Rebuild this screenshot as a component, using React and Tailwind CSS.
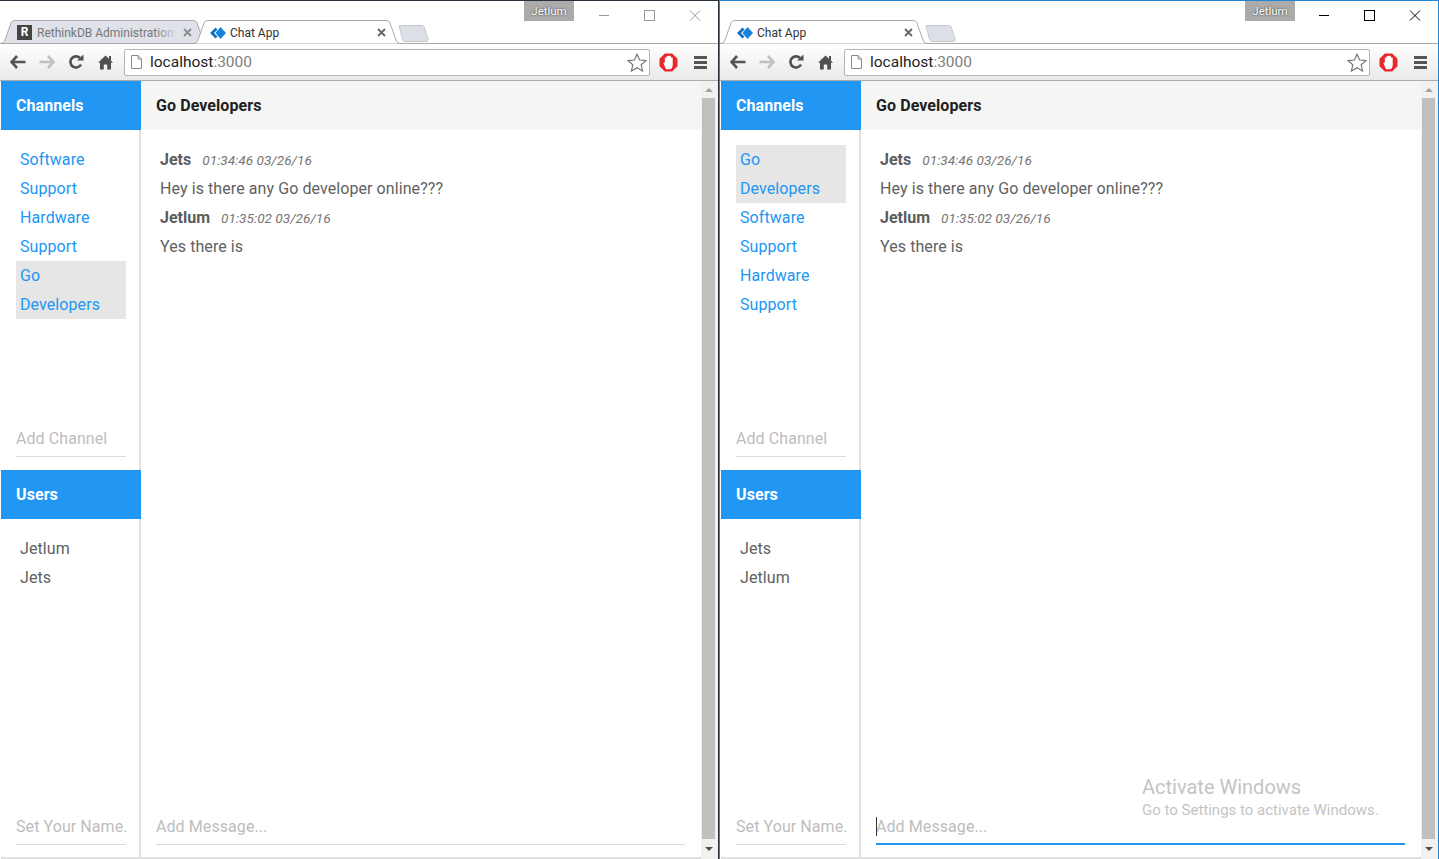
const channelsA = ["Software", "Support", "Hardware", "Support"];

function TabShape({ active }) {
  const edge = "M0 23.500 C3 23.500 4 22.500 5 20 L11 3 C12 1 13 0.500 16 0.500 L192 0.500 C195 0.500 196 1 197 3 L203 20 C204 22.500 205 23.500 208 23.500";
  return (
    <svg className="absolute inset-0 w-full h-full" viewBox="0 0 208 24">
      <path
        d={active ? edge : edge + " Z"}
        fill={active ? "#ffffff" : "#dfe2e8"}
        stroke="#a9a9a9"
        strokeWidth="1"
      />
    </svg>
  );
}

function Favicon() {
  return (
    <svg width="16" height="12" viewBox="0 0 16 12" className="shrink-0">
      <path d="M5.500 0.500 L0 6 L5.500 11.500 L7.500 9.500 L4 6 L7.500 2.500 Z" fill="#0f6fc0" />
      <path d="M10.500 0 L16 6 L10.500 12 L5.500 6 Z" fill="#1583dc" />
    </svg>
  );
}

function CloseX({ color = "#666" }) {
  return (
    <svg width="9" height="9" viewBox="0 0 9 9" className="shrink-0">
      <path d="M1 1 L8 8 M8 1 L1 8" stroke={color} strokeWidth="1.800" />
    </svg>
  );
}

function NewTab() {
  return (
    <svg width="31" height="17" viewBox="0 0 31 17" className="shrink-0">
      <path d="M1 0.500 L23 0.500 C25 0.500 26 1 26.500 3 L30 14 C30.500 15.500 30 16.500 28 16.500 L7 16.500 C5.500 16.500 5 15.500 4.500 14 L1 0.500 Z" fill="#dce0e6" stroke="#c4c7cc" />
    </svg>
  );
}

function WindowButtons({ focused }) {
  const c = focused ? "#000000" : "#9a9a9a";
  return (
    <div className="flex items-center h-[30px]">
      <svg width="45" height="30" viewBox="0 0 45 30">
        <path d="M17 14.500 L27 14.500" stroke={c} />
      </svg>
      <svg width="45" height="30" viewBox="0 0 45 30">
        <rect x="17.500" y="9.500" width="10" height="10" fill="none" stroke={c} />
      </svg>
      <svg width="45" height="30" viewBox="0 0 45 30">
        <path d="M18 9.500 L28 19.500 M28 9.500 L18 19.500" stroke={c} />
      </svg>
    </div>
  );
}

function Back({ color }) {
  return (
    <svg width="16" height="14" viewBox="0 0 16 14">
      <path d="M7 1 L1.500 7 L7 13 M2 7 L15.500 7" fill="none" stroke={color} strokeWidth="2.600" />
    </svg>
  );
}

function Forward({ color }) {
  return (
    <svg width="16" height="14" viewBox="0 0 16 14">
      <path d="M9 1 L14.500 7 L9 13 M14 7 L0.500 7" fill="none" stroke={color} strokeWidth="2.600" />
    </svg>
  );
}

function Reload() {
  return (
    <svg width="16" height="16" viewBox="0 0 16 16">
      <path d="M13 10.500 A5.600 5.600 0 1 1 12 4" fill="none" stroke="#505050" strokeWidth="2.600" />
      <path d="M9 6.500 L15.500 6.500 L15.500 0.500 Z" fill="#505050" />
    </svg>
  );
}

function Home() {
  return (
    <svg width="15" height="15" viewBox="0 0 15 15">
      <path d="M7.500 0.500 L11 3.800 L11 1 L13 1 L13 5.700 L15 7.700 L13 7.700 L13 14.500 L9.200 14.500 L9.200 9.500 L5.800 9.500 L5.800 14.500 L2 14.500 L2 7.700 L0 7.700 Z" fill="#505050" />
    </svg>
  );
}

function PageIcon() {
  return (
    <svg width="11" height="14" viewBox="0 0 11 14" className="shrink-0">
      <path d="M0.500 0.500 L7 0.500 L10.500 4 L10.500 13.500 L0.500 13.500 Z M7 0.500 L7 4 L10.500 4" fill="#fff" stroke="#8a8a8a" />
    </svg>
  );
}

function Star() {
  return (
    <svg width="20" height="19" viewBox="0 0 20 19" className="shrink-0">
      <path d="M10 1.200 L12.600 7 L19 7.600 L14.200 11.800 L15.600 18 L10 14.800 L4.400 18 L5.800 11.800 L1 7.600 L7.400 7 Z" fill="#fff" stroke="#777" strokeWidth="1.200" />
    </svg>
  );
}

function AdBlock() {
  return (
    <svg width="19" height="19" viewBox="0 0 18 18" className="shrink-0">
      <path d="M5.500 0.500 L12.500 0.500 L17.500 5.500 L17.500 12.500 L12.500 17.500 L5.500 17.500 L0.500 12.500 L0.500 5.500 Z" fill="#e8262a" />
      <path d="M4 9.500 L5.500 9 L5.500 4.500 L7 4.500 L7 3 L8.500 3 L8.500 2.500 L10 2.500 L10 3 L11.500 3 L11.500 4.500 L13 4.500 L13 11 C13 14 12 15.500 10 15.500 L8 15.500 C6.500 15.500 6 14 5.500 12.500 Z" fill="#fff" />
    </svg>
  );
}

function MenuIcon() {
  return (
    <div className="flex flex-col gap-[2px] w-[13px] shrink-0">
      <div className="h-[3px] bg-[#555555]" />
      <div className="h-[3px] bg-[#555555]" />
      <div className="h-[3px] bg-[#555555]" />
    </div>
  );
}

function Scrollbar() {
  return (
    <div className="w-[17px] shrink-0 flex flex-col bg-[#f1f1f1] pl-px">
      <div className="h-[17px] w-[13px] flex items-center justify-center shrink-0">
        <div className="w-0 h-0 border-x-[4px] border-x-transparent border-b-[4px] border-b-[#a3a3a3]" />
      </div>
      <div className="w-[13px] flex-1 bg-[#bfbfbf]" />
      <div className="h-[20px] w-[13px] flex items-center justify-center shrink-0">
        <div className="w-0 h-0 border-x-[4px] border-x-transparent border-t-[4px] border-t-[#505050]" />
      </div>
    </div>
  );
}

function Sidebar({ channels, users, current }) {
  return (
    <div className="w-[140px] shrink-0 flex flex-col border-r-2 border-[#e0e0e0]">
      <div className="h-[49px] bg-[#2196f3] text-white font-bold text-[16px] tracking-[0.08px] pt-px px-[15px] flex items-center -mr-[2px] relative">Channels</div>
      <div className="h-[340px] flex flex-col px-[15px] pt-[15px]">
        <ul className="flex-1 text-[#2196f3] text-[16px] tracking-[0.08px] leading-[29px] w-[110px]">
          {channels.map((ch, i) => (
            <li key={i} className={ch === current ? "px-1 bg-[#e6e6e6]" : "px-1"}>{ch}</li>
          ))}
        </ul>
        <div className="h-[33px] border-b border-[#d9d9d9] w-[110px] text-[#bdbdbd] text-[16px] tracking-[0.08px] leading-[30px] mb-[13px]">Add Channel</div>
      </div>
      <div className="h-[49px] bg-[#2196f3] text-white font-bold text-[16px] tracking-[0.08px] pt-px px-[15px] flex items-center -mr-[2px] relative">Users</div>
      <div className="flex-1 flex flex-col px-[15px] pt-[15px]">
        <ul className="flex-1 text-[#616161] text-[16px] tracking-[0.08px] leading-[29px]">
          {users.map((u) => (
            <li key={u} className="px-1">{u}</li>
          ))}
        </ul>
        <div className="h-[33px] border-b border-[#d9d9d9] w-[110px] text-[#bdbdbd] text-[16px] tracking-[0.08px] leading-[30px] mb-[12px] whitespace-nowrap">Set Your Name.</div>
      </div>
    </div>
  );
}

function Message({ name, time, text }) {
  return (
    <>
      <div className="h-[28px] leading-[29px] text-[#5c5c5c]">
        <span className="font-bold text-[16px] mr-[11px]">{name}</span>
        <span className="italic text-[13.6px] text-[#757575]">{time}</span>
      </div>
      <div className="h-[30px] leading-[31px] text-[16px] tracking-[0.08px] text-[#616161]">{text}</div>
    </>
  );
}

function Main({ focused }) {
  return (
    <div className="flex-1 flex flex-col">
      <div className="h-[49px] bg-[#f5f5f5] text-[#212121] font-bold text-[16px] tracking-[0.08px] pt-px px-[15px] flex items-center shrink-0">Go Developers</div>
      <div className="flex-1 px-[19px] pt-[15px]">
        <Message name="Jets" time="01:34:46 03/26/16" text="Hey is there any Go developer online???" />
        <Message name="Jetlum" time="01:35:02 03/26/16" text="Yes there is" />
      </div>
      <div className={focused ? "relative h-[34px] mx-[15px] mb-[12px] mr-[16px] border-b-2 border-[#2196f3] text-[#bdbdbd] text-[16px] tracking-[0.08px] leading-[32px]" : "relative h-[34px] mx-[15px] mb-[12px] mr-[16px] border-b border-[#d9d9d9] text-[#bdbdbd] text-[16px] tracking-[0.08px] leading-[32px]"}>
        {focused && <span className="absolute left-0 top-[6px] w-px h-[19px] bg-[#333333]" />}
        Add Message...
      </div>
    </div>
  );
}

function Chrome({ focused, tabs }) {
  return (
    <div className={focused ? "w-[720px] h-[859px] shrink-0 flex flex-col border-x border-t border-[#1c86d9] bg-white overflow-hidden relative" : "w-[719px] h-[859px] shrink-0 flex flex-col border-t border-[#27323d] border-r border-r-[#27323d] bg-white overflow-hidden relative"}>
      <div className="h-[43px] shrink-0 flex border-b border-[#a9a9a9] relative">
        <div className="flex items-end h-[43px] flex-1 -mb-px">
          {tabs}
        </div>
        <div className="absolute right-px top-0 flex items-start">
          <div className={focused ? "absolute right-[142px] w-[50px] h-[20px] bg-[#ababab] text-white text-[11.5px] text-center leading-[21px] [text-shadow:0_0_2px_#222222]" : "absolute right-[143px] w-[50px] h-[20px] bg-[#ababab] text-white text-[11.5px] text-center leading-[21px] [text-shadow:0_0_2px_#222222]"}>Jetlum</div>
          <WindowButtons focused={focused} />
        </div>
      </div>
      <div className="h-[37px] shrink-0 flex items-center bg-gradient-to-b from-white to-[#e9e9e9] border-b border-[#ababab]">
        <div className="w-[10px] shrink-0" />
        <div className="w-[29px] shrink-0"><Back color="#555555" /></div>
        <div className="w-[29px] shrink-0"><Forward color="#c0c0c0" /></div>
        <div className="w-[29px] shrink-0"><Reload /></div>
        <div className="w-[27px] shrink-0 pl-px"><Home /></div>
        <div className="flex-1 h-[27px] bg-white border border-[#b5b5b5] rounded-[2px] flex items-center pl-[6px] pr-[2px] gap-[8px]">
          <PageIcon />
          <span className="flex-1 text-[15.5px] text-[#222222] pt-px">localhost<span className="text-[#808080]">:3000</span></span>
          <Star />
        </div>
        <div className="w-[44px] shrink-0 flex items-center pl-[9px]"><AdBlock /></div>
        <div className="w-[24px] shrink-0"><MenuIcon /></div>
      </div>
      <div className="flex-1 flex min-h-0">
        <div className="flex-1 flex border-b-2 border-[#e0e0e0] ml-px">
          <Sidebar
            channels={focused ? ["Go Developers", ...channelsA] : [...channelsA, "Go Developers"]}
            users={focused ? ["Jets", "Jetlum"] : ["Jetlum", "Jets"]}
            current="Go Developers"
          />
          <Main focused={focused} />
        </div>
        <Scrollbar />
      </div>
      {focused && (
        <div className="absolute left-[422px] top-[773px] text-[#c4c4c4] pointer-events-none whitespace-nowrap">
          <div className="text-[20px] leading-[26px]">Activate Windows</div>
          <div className="text-[15px] leading-[20px]">Go to Settings to activate Windows.</div>
        </div>
      )}
    </div>
  );
}

function ChatTab({ className }) {
  return (
    <div className={"relative w-[208px] h-[24px] shrink-0 flex items-center " + className}>
      <TabShape active />
      <div className="relative flex items-center w-full pl-[17px] pr-[15px] gap-[4px] text-[12px] pt-px">
        <Favicon />
        <span className="flex-1 text-[#333333]">Chat App</span>
        <CloseX />
      </div>
    </div>
  );
}

export default function App() {
  return (
    <div className="flex w-[1439px] h-[859px] overflow-hidden font-['Roboto',sans-serif]">
      <Chrome
        focused={false}
        tabs={
          <>
            <div className="relative w-[208px] h-[24px] shrink-0 flex items-center">
              <TabShape active={false} />
              <div className="relative flex items-center w-full pl-[17px] pr-[16px] gap-[5px] text-[12px] pt-px">
                <span className="w-[15px] h-[15px] bg-[#444444] text-white text-[12px] font-bold leading-[15px] text-center shrink-0">R</span>
                <span className="relative flex-1 whitespace-nowrap text-[#777777]">
                  RethinkDB Administration
                  <span className="absolute right-0 top-0 h-full w-[22px] bg-gradient-to-r from-transparent to-[#dfe2e8]" />
                </span>
                <CloseX color="#8c8c8c" />
              </div>
            </div>
            <ChatTab className="-ml-[15px]" />
            <div className="mb-[2px] -ml-[3px]"><NewTab /></div>
          </>
        }
      />
      <Chrome
        focused
        tabs={
          <>
            <ChatTab className="" />
            <div className="mb-[2px] -ml-[3px]"><NewTab /></div>
          </>
        }
      />
    </div>
  );
}
